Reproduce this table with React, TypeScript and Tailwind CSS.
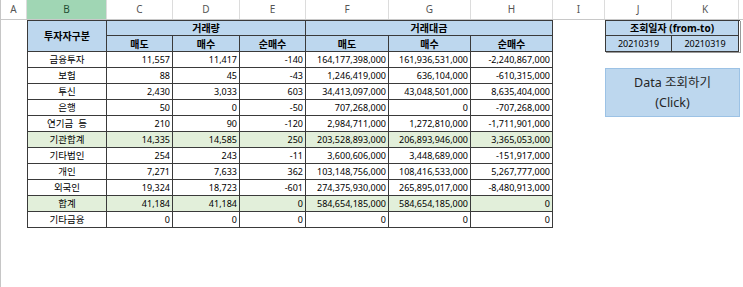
import React from "react";

type Row = { label: string; vals: string[]; green?: boolean };

const rows: Row[] = [
  { label: "금융투자", vals: ["11,557", "11,417", "-140", "164,177,398,000", "161,936,531,000", "-2,240,867,000"] },
  { label: "보험", vals: ["88", "45", "-43", "1,246,419,000", "636,104,000", "-610,315,000"] },
  { label: "투신", vals: ["2,430", "3,033", "603", "34,413,097,000", "43,048,501,000", "8,635,404,000"] },
  { label: "은행", vals: ["50", "0", "-50", "707,268,000", "0", "-707,268,000"] },
  { label: "연기금 등", vals: ["210", "90", "-120", "2,984,711,000", "1,272,810,000", "-1,711,901,000"] },
  { label: "기관합계", vals: ["14,335", "14,585", "250", "203,528,893,000", "206,893,946,000", "3,365,053,000"], green: true },
  { label: "기타법인", vals: ["254", "243", "-11", "3,600,606,000", "3,448,689,000", "-151,917,000"] },
  { label: "개인", vals: ["7,271", "7,633", "362", "103,148,756,000", "108,416,533,000", "5,267,777,000"] },
  { label: "외국인", vals: ["19,324", "18,723", "-601", "274,375,930,000", "265,895,017,000", "-8,480,913,000"] },
  { label: "합계", vals: ["41,184", "41,184", "0", "584,654,185,000", "584,654,185,000", "0"], green: true },
  { label: "기타금융", vals: ["0", "0", "0", "0", "0", "0"] },
];

const colHeaders: { l: string; w: string; sel?: boolean }[] = [
  { l: "A", w: "w-[26px]" },
  { l: "B", w: "w-[80px]", sel: true },
  { l: "C", w: "w-[66px]" },
  { l: "D", w: "w-[67px]" },
  { l: "E", w: "w-[66px]" },
  { l: "F", w: "w-[83px]" },
  { l: "G", w: "w-[82px]" },
  { l: "H", w: "w-[82px]" },
  { l: "I", w: "w-[52px]" },
  { l: "J", w: "w-[67px]" },
  { l: "K", w: "w-[67px]" },
];

export default function App() {
  const cell = "border-r border-b border-[#3a3a3a] flex items-center";
  return (
    <div className="h-[287px] w-[743px] overflow-hidden bg-white border-l border-[#c6c6c6] font-['Noto_Sans','Noto_Sans_CJK_KR',sans-serif] text-black">
      {/* column header row */}
      <div className="flex h-[20px] border-b border-[#c8c8c8] text-[10px] text-[#555]">
        {colHeaders.map((c) => (
          <div
            key={c.l}
            className={`${c.w} shrink-0 flex items-center justify-center border-r border-[#dcdcdc] ${
              c.sel ? "bg-[#a0d6b4] text-[#1e4d32]" : ""
            }`}
          >
            {c.l}
          </div>
        ))}
        <div className="flex-1" />
      </div>

      <div className="flex">
        <div className="w-[26px] shrink-0" />
        {/* main table */}
        <div className="grid grid-cols-[79px_66px_67px_66px_83px_82px_82px] grid-rows-[15px_16px_repeat(11,16px)] border-l border-t border-[#3a3a3a] text-[9px] leading-none w-[526px] shrink-0">
          <div className={`${cell} row-span-2 justify-center bg-[#bdd7ee] font-bold text-[10px]`}>투자자구분</div>
          <div className={`${cell} col-span-3 justify-center bg-[#bdd7ee] font-bold text-[10px]`}>거래량</div>
          <div className={`${cell} col-span-3 justify-center bg-[#bdd7ee] font-bold text-[10px]`}>거래대금</div>
          {["매도", "매수", "순매수", "매도", "매수", "순매수"].map((h, i) => (
            <div key={i} className={`${cell} justify-center bg-[#bdd7ee] font-bold text-[10px]`}>
              {h}
            </div>
          ))}
          {rows.map((r) => (
            <React.Fragment key={r.label}>
              <div className={`${cell} justify-center whitespace-pre text-[9.5px] ${r.green ? "bg-[#e2efda]" : ""}`}>
                {r.label === "연기금 등" ? "연기금  등" : r.label}
              </div>
              {r.vals.map((v, i) => (
                <div key={i} className={`${cell} justify-end pr-[2px] ${r.green ? "bg-[#e2efda]" : ""}`}>
                  {v}
                </div>
              ))}
            </React.Fragment>
          ))}
        </div>

        <div className="w-[52px] shrink-0" />

        {/* right panel */}
        <div className="flex flex-col w-[135px] shrink-0">
          <div className="grid grid-cols-[66px_67px] grid-rows-[15px_16px] border-l border-t border-[#3a3a3a] text-[9px] leading-none shadow-[1px_1px_0_#9a9a9a]">
            <div className={`${cell} col-span-2 justify-center bg-[#bdd7ee] font-bold text-[10px]`}>조회일자 (from-to)</div>
            <div className={`${cell} justify-center bg-[#bdd7ee]`}>20210319</div>
            <div className={`${cell} justify-center bg-[#bdd7ee]`}>20210319</div>
          </div>
          <div className="mt-[16px] h-[49px] w-[135px] border border-[#9cc2e5] bg-[#bdd7ee] flex flex-col items-center justify-center text-[#262626] text-[12.5px] leading-[20px]">
            <div>Data 조회하기</div>
            <div>(Click)</div>
          </div>
        </div>
      </div>
    </div>
  );
}
